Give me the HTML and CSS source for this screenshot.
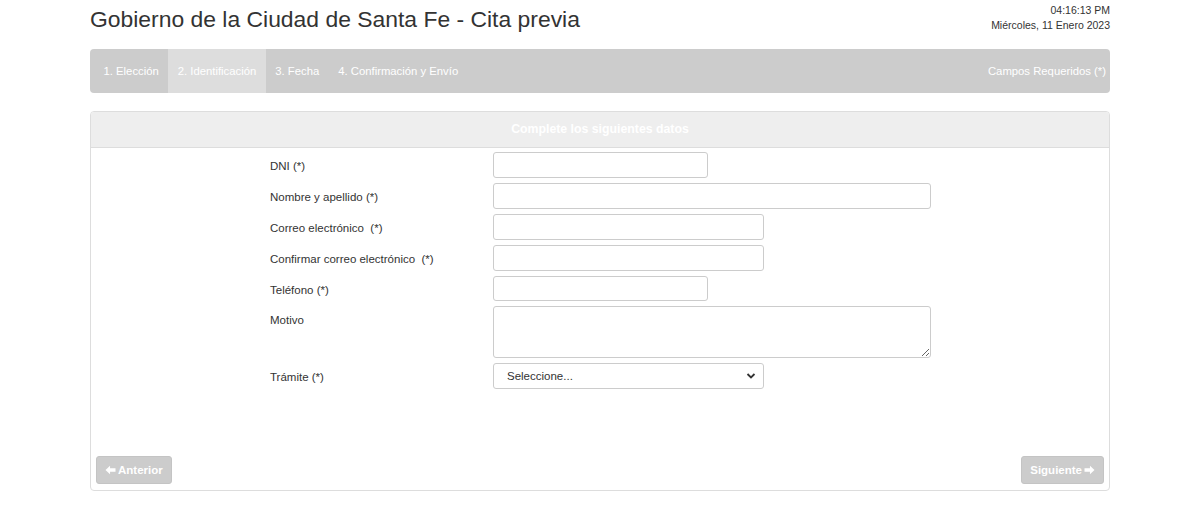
FILE: index.html
```html
<!DOCTYPE html>
<html lang="es">
<head>
<meta charset="utf-8">
<title>Cita previa</title>
<link rel="stylesheet" href="styles.css">
</head>
<body>
<div class="container">
  <header class="top">
    <h1 class="title">Gobierno de la Ciudad de Santa Fe - Cita previa</h1>
    <div class="clock">
      <div>04:16:13 PM</div>
      <div>Miércoles, 11 Enero 2023</div>
    </div>
  </header>
  <nav class="steps">
    <ul class="step-list">
      <li class="step">1. Elección</li>
      <li class="step active">2. Identificación</li>
      <li class="step">3. Fecha</li>
      <li class="step">4. Confirmación y Envío</li>
    </ul>
    <div class="required">Campos Requeridos (*)</div>
  </nav>
  <section class="panel">
    <div class="panel-head">Complete los siguientes datos</div>
    <div class="panel-body">
      <form class="form">
        <label class="lbl">DNI (*)</label>
        <div class="field"><input class="inp w-sm" type="text"></div>
        <label class="lbl">Nombre y apellido (*)</label>
        <div class="field"><input class="inp w-lg" type="text"></div>
        <label class="lbl">Correo electrónico&nbsp; (*)</label>
        <div class="field"><input class="inp w-md" type="text"></div>
        <label class="lbl">Confirmar correo electrónico&nbsp; (*)</label>
        <div class="field"><input class="inp w-md" type="text"></div>
        <label class="lbl">Teléfono (*)</label>
        <div class="field"><input class="inp w-sm short" type="text"></div>
        <label class="lbl lbl-top">Motivo</label>
        <div class="field"><textarea class="inp area w-lg"></textarea></div>
        <label class="lbl">Trámite (*)</label>
        <div class="field">
          <div class="select w-md">
            <span>Seleccione...</span>
            <svg class="chev" width="10" height="8" viewBox="0 0 10 8"><path d="M1.5 2 L5 5.5 L8.5 2" fill="none" stroke="#333" stroke-width="1.8"/></svg>
          </div>
        </div>
      </form>
      <div class="actions">
        <button class="btn" type="button">
          <svg width="11" height="10" viewBox="0 0 12 11"><path d="M0.5 5.5 L5.5 0.8 L5.5 3.6 L11.5 3.6 L11.5 7.4 L5.5 7.4 L5.5 10.2 Z" fill="#fff"/></svg>
          Anterior
        </button>
        <button class="btn" type="button">
          Siguiente
          <svg width="11" height="10" viewBox="0 0 12 11"><path d="M11.5 5.5 L6.5 0.8 L6.5 3.6 L0.5 3.6 L0.5 7.4 L6.5 7.4 L6.5 10.2 Z" fill="#fff"/></svg>
        </button>
      </div>
    </div>
  </section>
</div>
</body>
</html>
```
FILE: styles.css
```css
* { box-sizing: border-box; }
html, body { margin: 0; padding: 0; background: #fff; }
body {
  font-family: "Liberation Sans", Arial, sans-serif;
  font-size: 11.5px;
  color: #333;
}
.container {
  width: 1020px;
  margin: 0 auto;
}
.top {
  display: flex;
  justify-content: space-between;
  align-items: flex-start;
  height: 49px;
}
.title {
  margin: 5px 0 0 0;
  font-size: 22.9px;
  font-weight: normal;
  line-height: 28px;
  color: #333;
}
.clock {
  text-align: right;
  font-size: 10.5px;
  line-height: 15px;
  padding-top: 3px;
  color: #333;
}
.steps {
  display: flex;
  justify-content: space-between;
  align-items: stretch;
  height: 44px;
  background: #cccccc;
  border-radius: 4px;
  color: #fff;
  font-size: 11.3px;
}
.step-list {
  display: flex;
  list-style: none;
  margin: 0;
  padding: 0 0 0 4px;
}
.step {
  display: flex;
  align-items: center;
  padding: 0 9.5px;
}
.step.active { background: #dddddd; }
.required {
  display: flex;
  align-items: center;
  padding-right: 4px;
}
.panel {
  margin-top: 18px;
  border: 1px solid #dddddd;
  border-radius: 4px;
  height: 380px;
  display: flex;
  flex-direction: column;
}
.panel-head {
  height: 36px;
  background: #eeeeee;
  border-bottom: 1px solid #dddddd;
  color: #fff;
  font-weight: bold;
  font-size: 12.3px;
  text-align: center;
  line-height: 35px;
  border-radius: 3px 3px 0 0;
}
.panel-body {
  flex: 1;
  display: flex;
  flex-direction: column;
  justify-content: space-between;
  padding: 4px 5px 6px 5px;
}
.form {
  display: grid;
  grid-template-columns: 223px 1fr;
  row-gap: 5px;
  padding-left: 174px;
}
.lbl {
  display: flex;
  align-items: center;
  padding-top: 2px;
  color: #333;
}
.lbl-top { align-items: flex-start; padding-top: 8px; }
.field { display: flex; }
.inp {
  height: 26px;
  border: 1px solid #cccccc;
  border-radius: 3px;
  background: #fff;
  font-family: inherit;
  font-size: 12px;
  padding: 0 10px;
  margin: 0;
}
.short { height: 25px; }
.area { height: 52px; resize: vertical; display: block; }
.w-sm { width: 215px; }
.w-md { width: 271px; }
.w-lg { width: 438px; }
.select {
  height: 26px;
  border: 1px solid #cccccc;
  border-radius: 3px;
  display: flex;
  align-items: center;
  justify-content: space-between;
  padding: 0 7px 0 13px;
  color: #333;
}
.chev { display: block; }
.actions {
  display: flex;
  justify-content: space-between;
}
.btn {
  display: flex;
  align-items: center;
  gap: 2px;
  height: 28px;
  padding: 0 8px;
  background: #cccccc;
  border: 1px solid #c4c4c4;
  border-radius: 3px;
  color: #fff;
  font-family: inherit;
  font-size: 11.5px;
  font-weight: bold;
}
```
